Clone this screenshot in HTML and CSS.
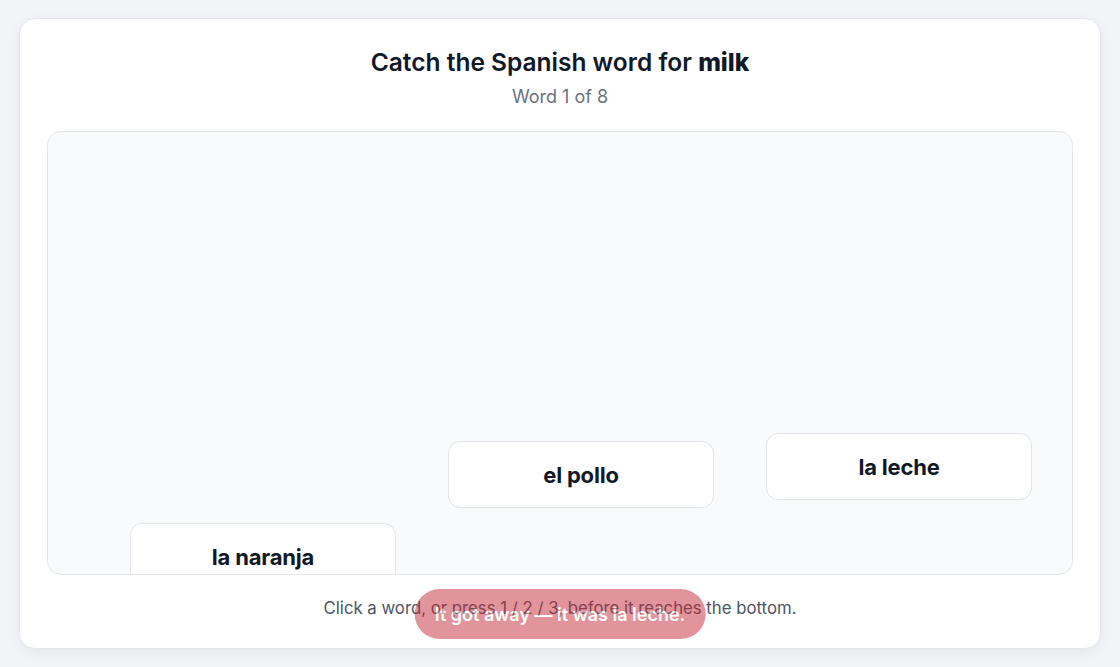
FILE: index.html
```html
<!DOCTYPE html>
<html lang="en">
<head>
<meta charset="utf-8">
<title>Catch the word</title>
<link rel="stylesheet" href="styles.css">
</head>
<body>
<main class="card">
  <h1 class="title">Catch the Spanish word for <strong>milk</strong></h1>
  <p class="progress">Word 1 of 8</p>
  <section class="arena">
    <button class="word" style="left:82px; top:391px">la naranja</button>
    <button class="word" style="left:400px; top:309px">el pollo</button>
    <button class="word" style="left:718px; top:301px">la leche</button>
  </section>
  <p class="hint">Click a word, or press 1 / 2 / 3, before it reaches the bottom.</p>
  <div class="toast">It got away — it was la leche.</div>
</main>
</body>
</html>
```

FILE: styles.css
```css
* { box-sizing: border-box; }
html, body { height: 100%; }
body {
  margin: 0;
  padding: 18px 19px;
  background: #f3f4f7;
  font-family: Inter, "Noto Sans", "Liberation Sans", sans-serif;
  color: #111827;
}
.card {
  position: relative;
  height: 631px;
  background: #ffffff;
  border: 1px solid #e5e7eb;
  border-radius: 16px;
  box-shadow: 0 4px 14px rgba(17, 24, 39, 0.06);
  padding: 27px 27px 28px;
  display: flex;
  flex-direction: column;
  align-items: stretch;
}
.title {
  margin: 0;
  text-align: center;
  font-size: 24.5px;
  line-height: 32px;
  font-weight: 600;
  color: #111827;
}
.title strong { font-weight: 800; }
.progress {
  margin: 7px 0 0;
  text-align: center;
  font-size: 18px;
  line-height: 24px;
  color: #6b7280;
}
.arena {
  position: relative;
  margin-top: 22px;
  height: 444px;
  background: #f8fafc;
  border: 1px solid #e5e7eb;
  border-radius: 14px;
  overflow: hidden;
}
.word {
  position: absolute;
  width: 266px;
  height: 67px;
  background: #ffffff;
  border: 1px solid #e2e5ea;
  border-radius: 12px;
  font-family: inherit;
  font-size: 22px;
  font-weight: 700;
  color: #111827;
  letter-spacing: -0.2px;
  cursor: pointer;
  padding: 0;
}
.hint {
  margin: 21px 0 0;
  text-align: center;
  font-size: 16.75px;
  line-height: 24px;
  color: #4b5563;
}
.toast {
  position: absolute;
  left: 50%;
  bottom: 9px;
  transform: translateX(-50%);
  height: 50px;
  padding: 0 20px;
  display: flex;
  align-items: center;
  border-radius: 25px;
  background: #c42b3b;
  color: #ffffff;
  font-size: 18px;
  font-weight: 600;
  white-space: nowrap;
  opacity: 0.5;
}
```
